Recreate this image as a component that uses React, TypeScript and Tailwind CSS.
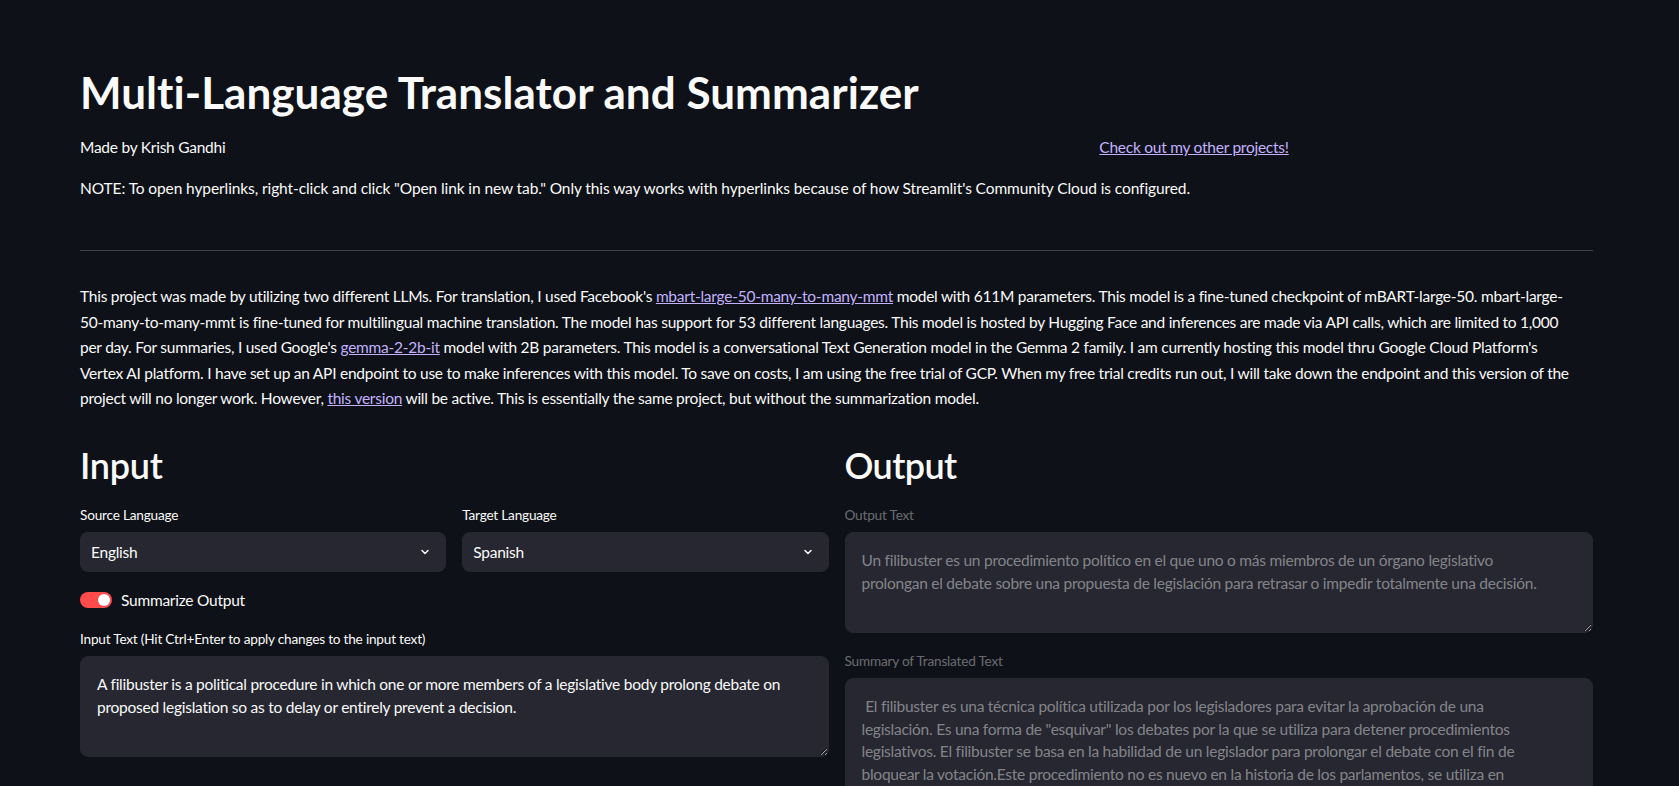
import React from "react";

const FONT = { fontFamily: "Lato, 'Noto Sans', sans-serif" };

function Chevron() {
  return (
    <svg width="12" height="12" viewBox="0 0 24 24" fill="none" stroke="#fafafa" strokeWidth="3" strokeLinecap="round" strokeLinejoin="round">
      <polyline points="6 9 12 15 18 9" />
    </svg>
  );
}

function Label({ children, dim, className = "" }: { children: React.ReactNode; dim?: boolean; className?: string }) {
  return (
    <div
      className={
        "text-[13.6px] tracking-[-0.2px] leading-[17px] h-[20px] mb-[5px] " +
        (dim ? "text-[rgba(250,250,250,0.4)] " : "text-[#fafafa] ") +
        className
      }
    >
      {children}
    </div>
  );
}

function Select({ label, value }: { label: string; value: string }) {
  return (
    <div className="flex flex-col">
      <Label>{label}</Label>
      <div className="h-[40px] rounded-lg bg-[#262730] flex items-center justify-between pl-[11px] pr-[15px]">
        <span className="text-[15.5px] tracking-[-0.25px] text-[#fafafa]">{value}</span>
        <Chevron />
      </div>
    </div>
  );
}

const ta =
  "w-full rounded-lg bg-[#262730] px-4 pt-[16px] pb-[14px] text-[15.5px] tracking-[-0.25px] leading-[22.6px] outline-none resize-y block border border-[#262730]";

const link = "underline text-[#c3b1ff]";

export default function App() {
  return (
    <div className="min-h-screen bg-[#0e1117] text-[#fafafa] text-[15.5px] tracking-[-0.25px]" style={FONT}>
      <div className="pl-20 pr-[86px] pt-[66px] pb-40">
        <h1 className="text-[44px] font-bold leading-[52.8px] tracking-[0.05px]">Multi-Language Translator and Summarizer</h1>

        <div className="grid grid-cols-3 gap-4 mt-[16px] leading-[25.6px]">
          <div>Made by Krish Gandhi</div>
          <div />
          <div>
            <a href="#" className={link}>Check out my other projects!</a>
          </div>
        </div>

        <p className="mt-[16px] leading-[25.6px] tracking-[-0.1px]">
          NOTE: To open hyperlinks, right-click and click "Open link in new tab." Only this way works with hyperlinks because of how Streamlit's Community Cloud is configured.
        </p>

        <hr className="mt-[48px] border-0 border-t border-[rgba(250,250,250,0.2)]" />

        <p className="mt-[33px] leading-[25.6px] whitespace-nowrap">
          This project was made by utilizing two different LLMs. For translation, I used Facebook's{" "}
          <a href="#" className={link}>mbart-large-50-many-to-many-mmt</a> model with 611M parameters. This model is a fine-tuned checkpoint of mBART-large-50. mbart-large-
          <br />
          50-many-to-many-mmt is fine-tuned for multilingual machine translation. The model has support for 53 different languages. This model is hosted by Hugging Face and inferences are made via API calls, which are limited to 1,000
          <br />
          per day. For summaries, I used Google's{" "}
          <a href="#" className={link}>gemma-2-2b-it</a> model with 2B parameters. This model is a conversational Text Generation model in the Gemma 2 family. I am currently hosting this model thru Google Cloud Platform's
          <br />
          Vertex AI platform. I have set up an API endpoint to use to make inferences with this model. To save on costs, I am using the free trial of GCP. When my free trial credits run out, I will take down the endpoint and this version of the
          <br />
          project will no longer work. However,{" "}
          <a href="#" className={link}>this version</a> will be active. This is essentially the same project, but without the summarization model.
        </p>

        <div className="grid grid-cols-2 gap-4 mt-[32px]">
          <div className="flex flex-col">
            <h2 className="text-[36px] font-semibold leading-[43.2px] tracking-[-0.3px]">Input</h2>
            <div className="grid grid-cols-2 gap-4 mt-[20px]">
              <Select label="Source Language" value="English" />
              <Select label="Target Language" value="Spanish" />
            </div>
            <div className="flex items-center gap-[9px] mt-[16px] h-[24px]">
              <div className="w-[32px] h-[16px] rounded-full bg-[#ff4b4b] flex items-center justify-end pr-[2px]">
                <div className="w-[12px] h-[12px] rounded-full bg-white" />
              </div>
              <span>Summarize Output</span>
            </div>
            <Label className="mt-[19px]">Input Text (Hit Ctrl+Enter to apply changes to the input text)</Label>
            <textarea
              className={ta + " h-[101px] text-[#fafafa]"}
              style={FONT}
              defaultValue={"A filibuster is a political procedure in which one or more members of a legislative body prolong debate on\nproposed legislation so as to delay or entirely prevent a decision."}
            />
          </div>

          <div className="flex flex-col">
            <h2 className="text-[36px] font-semibold leading-[43.2px] tracking-[-0.6px]">Output</h2>
            <Label dim className="mt-[20px]">Output Text</Label>
            <textarea
              disabled
              className={ta + " h-[101px] text-[rgba(250,250,250,0.45)]"}
              style={FONT}
              defaultValue={"Un filibuster es un procedimiento político en el que uno o más miembros de un órgano legislativo\nprolongan el debate sobre una propuesta de legislación para retrasar o impedir totalmente una decisión."}
            />
            <Label dim className="mt-[20px]">Summary of Translated Text</Label>
            <textarea
              disabled
              className={ta + " h-[300px] text-[rgba(250,250,250,0.45)]"}
              style={FONT}
              defaultValue={" El filibuster es una técnica política utilizada por los legisladores para evitar la aprobación de una\nlegislación. Es una forma de \"esquivar\" los debates por la que se utiliza para detener procedimientos\nlegislativos. El filibuster se basa en la habilidad de un legislador para prolongar el debate con el fin de\nbloquear la votación.Este procedimiento no es nuevo en la historia de los parlamentos, se utiliza en\nmuchos países como una herramienta para proteger los derechos de las minorías."}
            />
          </div>
        </div>
      </div>
    </div>
  );
}
